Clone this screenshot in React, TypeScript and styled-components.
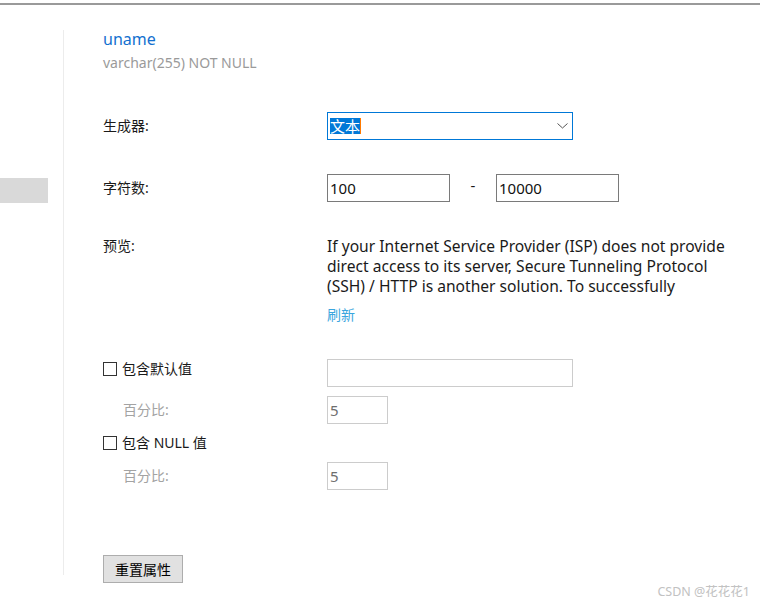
import styled, { createGlobalStyle } from "styled-components";

const GlobalStyle = createGlobalStyle`
  html, body {
    margin: 0;
    padding: 0;
    background: #ffffff;
    overflow: hidden;
  }
  body {
    font-family: "Noto Sans", "Noto Sans CJK SC", sans-serif;
    color: #1a1a1a;
  }
`;

const Page = styled.div`
  position: relative;
  width: 760px;
  height: 602px;
`;

const TopRule = styled.div`
  margin-top: 3px;
  height: 2px;
  background: #9a9a9a;
`;

const Layout = styled.div`
  display: flex;
`;

const Sidebar = styled.div`
  width: 63px;
  height: 545px;
  margin-top: 25px;
  border-right: 1px solid #ececec;
  flex-shrink: 0;
`;

const SideTab = styled.div`
  margin-top: 148px;
  width: 48px;
  height: 25px;
  background: #d9d9d9;
`;

const Main = styled.div`
  padding: 24px 0 0 39px;
  display: flex;
  flex-direction: column;
`;

const FieldName = styled.div`
  height: 20px;
  font-size: 16px;
  line-height: 20px;
  color: #1370cf;
`;

const FieldType = styled.div`
  height: 20px;
  margin-top: 4px;
  font-size: 14px;
  line-height: 20px;
  color: #9a9a9a;
`;

const Row = styled.div<{ $top: number; $align?: string }>`
  display: grid;
  grid-template-columns: 224px 1fr;
  align-items: ${(p) => p.$align ?? "center"};
  margin-top: ${(p) => p.$top}px;
`;

const Label = styled.div<{ $muted?: boolean; $indent?: number }>`
  height: 20px;
  font-size: 14px;
  line-height: 20px;
  color: ${(p) => (p.$muted ? "#a3a3a3" : "#1a1a1a")};
  padding-left: ${(p) => p.$indent ?? 0}px;
`;

const Select = styled.div`
  box-sizing: border-box;
  width: 246px;
  height: 28px;
  border: 1px solid #0078d7;
  display: flex;
  align-items: center;
  justify-content: space-between;
  padding: 0 4px 0 2px;
`;

const Selected = styled.span`
  font-size: 15px;
  line-height: 16px;
  background: #0078d7;
  color: #ffffff;
  border-right: 1px solid #ff7a00;
`;

const TextBox = styled.div<{ $w: number; $light?: boolean }>`
  box-sizing: border-box;
  width: ${(p) => p.$w}px;
  height: 28px;
  border: 1px solid ${(p) => (p.$light ? "#cccccc" : "#7a7a7a")};
  padding-left: 2px;
  display: flex;
  align-items: center;
  font-size: 15px;
  color: ${(p) => (p.$light ? "#6e6e6e" : "#111111")};
`;

const Range = styled.div`
  display: flex;
  align-items: center;
`;

const Dash = styled.span`
  width: 46px;
  text-align: center;
  font-size: 15px;
  margin-top: -6px;
`;

const Preview = styled.div`
  width: 402px;
  font-size: 15.6px;
  line-height: 20px;
  color: #1a1a1a;
`;

const Refresh = styled.div`
  height: 20px;
  margin-top: 9px;
  font-size: 14px;
  line-height: 20px;
  color: #3aa6de;
`;

const Check = styled.label`
  height: 20px;
  display: flex;
  align-items: center;
  gap: 5px;
  font-size: 14px;
  line-height: 20px;
  color: #1a1a1a;
`;

const Box = styled.span`
  box-sizing: border-box;
  width: 14px;
  height: 14px;
  border: 1px solid #333333;
`;

const Button = styled.div`
  box-sizing: border-box;
  margin-top: 65px;
  width: 80px;
  height: 28px;
  background: #e1e1e1;
  border: 1px solid #adadad;
  display: flex;
  align-items: center;
  justify-content: center;
  font-size: 14px;
  color: #000000;
`;

const Watermark = styled.div`
  position: absolute;
  right: 10px;
  bottom: 5px;
  font-size: 12.5px;
  color: #c2c2c2;
`;

export default function App() {
  return (
    <Page>
      <GlobalStyle />
      <TopRule />
      <Layout>
        <Sidebar>
          <SideTab />
        </Sidebar>
        <Main>
          <FieldName>uname</FieldName>
          <FieldType>varchar(255) NOT NULL</FieldType>

          <Row $top={39}>
            <Label>生成器:</Label>
            <Select>
              <Selected>文本</Selected>
              <svg width="11" height="6" viewBox="0 0 11 6">
                <path d="M0.5 0.5 L5.5 5 L10.5 0.5" fill="none" stroke="#555" strokeWidth="1" />
              </svg>
            </Select>
          </Row>

          <Row $top={34}>
            <Label>字符数:</Label>
            <Range>
              <TextBox $w={123}>100</TextBox>
              <Dash>-</Dash>
              <TextBox $w={123}>10000</TextBox>
            </Range>
          </Row>

          <Row $top={34} $align="start">
            <Label>预览:</Label>
            <div>
              <Preview>
                If your Internet Service Provider (ISP) does not provide direct access to its server, Secure
                Tunneling Protocol (SSH) / HTTP is another solution. To successfully
              </Preview>
              <Refresh>刷新</Refresh>
            </div>
          </Row>

          <Row $top={34} $align="start">
            <Check>
              <Box />
              包含默认值
            </Check>
            <TextBox $w={246} $light />
          </Row>

          <Row $top={9}>
            <Label $muted $indent={20}>百分比:</Label>
            <TextBox $w={61} $light>5</TextBox>
          </Row>

          <Row $top={9}>
            <Check>
              <Box />
              包含 NULL 值
            </Check>
          </Row>

          <Row $top={9}>
            <Label $muted $indent={20}>百分比:</Label>
            <TextBox $w={61} $light>5</TextBox>
          </Row>

          <Button>重置属性</Button>
        </Main>
      </Layout>
      <Watermark>CSDN @花花花1</Watermark>
    </Page>
  );
}
